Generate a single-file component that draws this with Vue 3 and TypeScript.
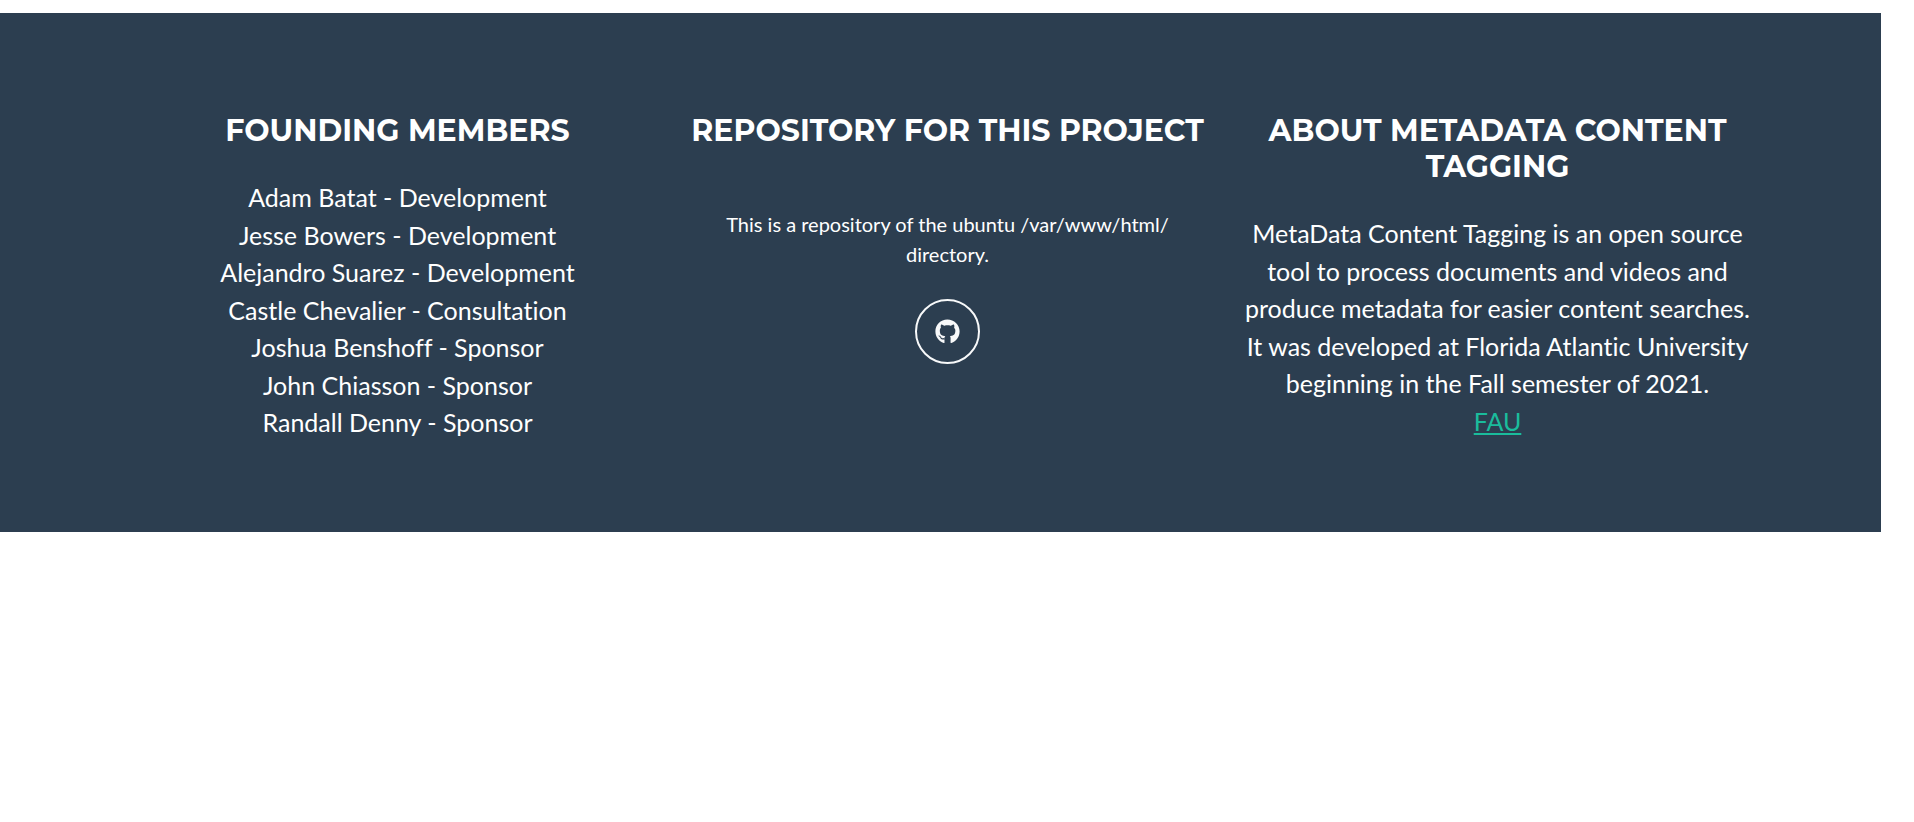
<script setup lang="ts">
interface Member {
  name: string
  role: string
}

const members: Member[] = [
  { name: 'Adam Batat', role: 'Development' },
  { name: 'Jesse Bowers', role: 'Development' },
  { name: 'Alejandro Suarez', role: 'Development' },
  { name: 'Castle Chevalier', role: 'Consultation' },
  { name: 'Joshua Benshoff', role: 'Sponsor' },
  { name: 'John Chiasson', role: 'Sponsor' },
  { name: 'Randall Denny', role: 'Sponsor' },
]
</script>

<template>
  <footer class="footer">
    <div class="container">
      <section class="column">
        <h4 class="title">Founding Members</h4>
        <ul class="members">
          <li v-for="member in members" :key="member.name">{{ member.name }} - {{ member.role }}</li>
        </ul>
      </section>

      <section class="column">
        <h4 class="title">Repository for this project</h4>
        <p class="note">This is a repository of the ubuntu /var/www/html/ directory.</p>
        <a class="social" href="#" aria-label="GitHub repository">
          <svg class="social-icon" viewBox="0 0 496 512" aria-hidden="true">
            <path
              fill="currentColor"
              d="M165.9 397.4c0 2-2.3 3.6-5.2 3.6-3.3.3-5.6-1.3-5.6-3.6 0-2 2.3-3.6 5.2-3.6 3-.3 5.6 1.3 5.6 3.6zm-31.1-4.5c-.7 2 1.3 4.3 4.3 4.9 2.6 1 5.6 0 6.2-2s-1.3-4.3-4.3-5.2c-2.6-.7-5.5.3-6.2 2.3zm44.2-1.7c-2.9.7-4.9 2.6-4.6 4.9.3 2 2.9 3.3 5.9 2.6 2.9-.7 4.9-2.6 4.6-4.6-.3-1.9-3-3.2-5.9-2.9zM244.8 8C106.1 8 0 113.3 0 252c0 110.9 69.8 205.8 169.5 239.2 12.8 2.3 17.3-5.6 17.3-12.1 0-6.2-.3-40.4-.3-61.4 0 0-70 15-84.7-29.8 0 0-11.4-29.1-27.8-36.6 0 0-22.9-15.7 1.6-15.4 0 0 24.9 2 38.6 25.8 21.9 38.6 58.6 27.5 72.9 20.9 2.3-16 8.8-27.1 16-33.7-55.9-6.2-112.3-14.3-112.3-110.5 0-27.5 7.6-41.3 23.6-58.9-2.6-6.5-11.1-33.3 2.6-67.9 20.9-6.5 69 27 69 27 20-5.6 41.5-8.5 62.8-8.5s42.8 2.9 62.8 8.5c0 0 48.1-33.6 69-27 13.7 34.7 5.2 61.4 2.6 67.9 16 17.7 25.8 31.5 25.8 58.9 0 96.5-58.9 104.2-114.8 110.5 9.2 7.9 17 22.9 17 46.4 0 33.7-.3 75.4-.3 83.6 0 6.5 4.6 14.4 17.3 12.1C428.2 457.8 496 362.9 496 252 496 113.3 383.5 8 244.8 8zM97.2 352.9c-1.3 1-1 3.3.7 5.2 1.6 1.6 3.9 2.3 5.2 1 1.3-1 1-3.3-.7-5.2-1.6-1.6-3.9-2.3-5.2-1zm-10.8-8.1c-.7 1.3.3 2.9 2.3 3.9 1.6 1 3.6.7 4.3-.7.7-1.3-.3-2.9-2.3-3.9-2-.6-3.6-.3-4.3.7zm32.4 35.6c-1.6 1.3-1 4.3 1.3 6.2 2.3 2.3 5.2 2.6 6.5 1 1.3-1.3.7-4.3-1.3-6.2-2.2-2.3-5.2-2.6-6.5-1zm-11.4-14.7c-1.6 1-1.6 3.6 0 5.9 1.6 2.3 4.3 3.3 5.6 2.3 1.6-1.3 1.6-3.9 0-6.2-1.4-2.3-4-3.3-5.6-2z"
            />
          </svg>
        </a>
      </section>

      <section class="column">
        <h4 class="title">About MetaData Content Tagging</h4>
        <p class="lead">
          MetaData Content Tagging is an open source tool to process documents and videos and produce
          metadata for easier content searches. It was developed at Florida Atlantic University
          beginning in the Fall semester of 2021.
          <br />
          <a class="link" href="#">FAU</a>
        </p>
      </section>
    </div>
  </footer>
</template>

<style>
body {
  margin: 0;
  background: #fff;
}
</style>

<style scoped>
.footer {
  box-sizing: border-box;
  margin: 13px 33px 0 0;
  padding: 100px 0 90px 14px;
  background: #2c3e50;
  color: #fff;
  font-family: Lato, "Liberation Sans", sans-serif;
  font-variant-ligatures: no-common-ligatures;
  text-align: center;
}

.container {
  display: grid;
  grid-template-columns: repeat(3, minmax(0, 1fr));
  max-width: 1650px;
  margin: 0 auto;
}

.column {
  padding: 0 15px;
}

.title {
  margin: 0 0 30px;
  font-family: Montserrat, Inter, sans-serif;
  font-size: 30px;
  font-weight: 700;
  line-height: 36px;
  text-transform: uppercase;
}

.members,
.lead {
  margin: 0;
  padding: 0;
  list-style: none;
  font-size: 25px;
  line-height: 1.5;
}

.note {
  margin: 60px 30px 30px;
  font-size: 20px;
  line-height: 30px;
}

.social {
  box-sizing: border-box;
  display: inline-flex;
  align-items: center;
  justify-content: center;
  width: 65px;
  height: 65px;
  border: 2px solid #f8f9fa;
  border-radius: 50%;
  color: #f8f9fa;
}

.social-icon {
  width: 25px;
  height: 25px;
}

.link {
  color: #1abc9c;
  text-decoration: underline;
}
</style>
